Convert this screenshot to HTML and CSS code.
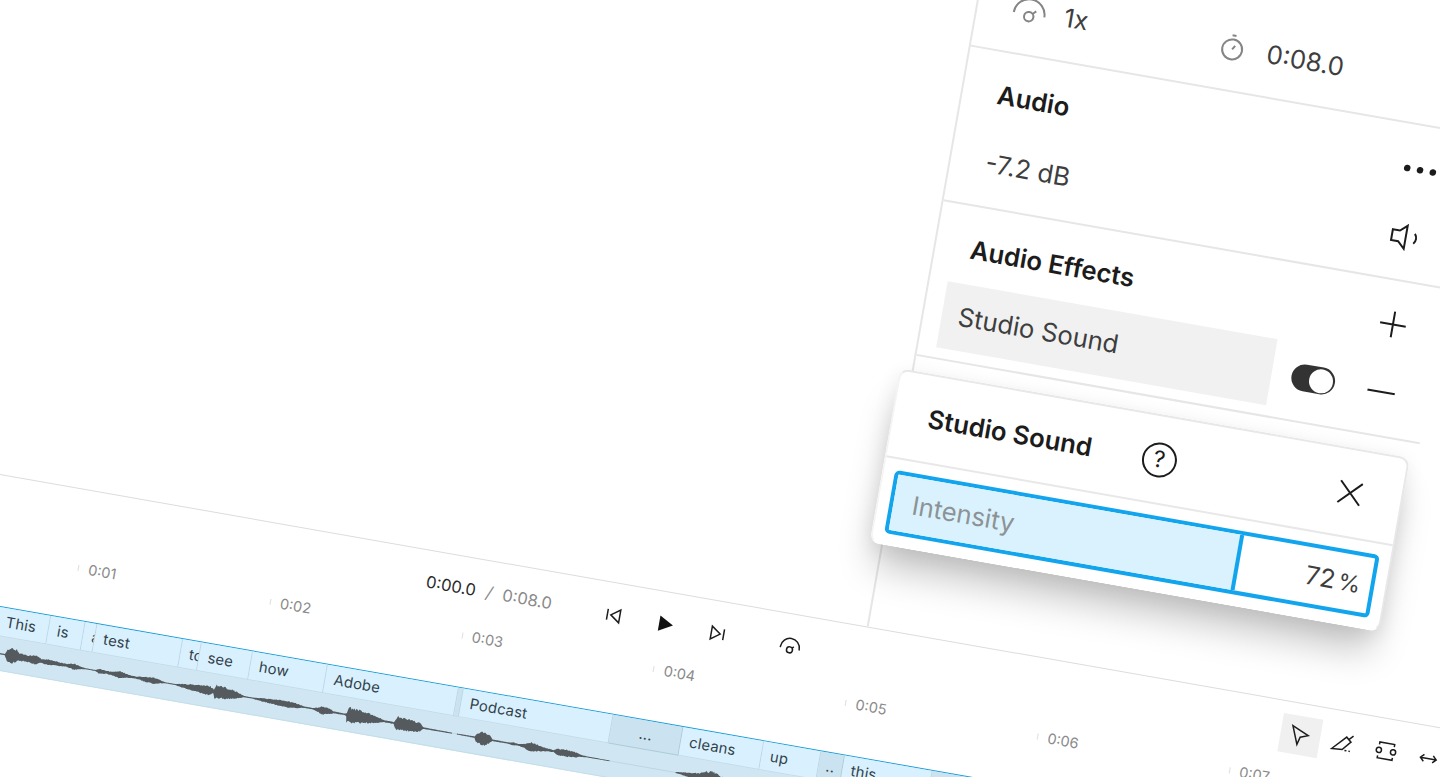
FILE: index.html
```html
<!DOCTYPE html>
<html lang="en">
<head>
  <meta charset="utf-8">
  <title>Studio Sound</title>
  <link rel="stylesheet" href="styles.css">
</head>
<body>
  <div class="scene">

    <div class="stage">
      <div class="preview"></div>

      <aside class="sidebar">
        <section class="section clip-info">
          <div class="speed">
            <svg class="icon gray" width="40" height="40" viewBox="0 0 40 40">
              <path d="M4.5 22.5a15.5 15.5 0 0 1 31 0"/>
              <circle cx="20" cy="24.5" r="4.7"/>
              <path d="M23.3 21.2l3.2-3.2"/>
            </svg>
            <span>1x</span>
          </div>
          <div class="duration">
            <svg class="icon gray" width="30" height="30" viewBox="0 0 30 30">
              <circle cx="15" cy="16.5" r="10"/>
              <path d="M15 16.5l2.4-4M13 2.5h4"/>
            </svg>
            <span>0:08.0</span>
          </div>
        </section>

        <section class="section">
          <div class="row">
            <h2>Audio</h2>
            <svg class="dots" width="34" height="28" viewBox="0 0 34 28">
              <circle cx="4" cy="14" r="3.3"/><circle cx="17" cy="14" r="3.3"/><circle cx="30" cy="14" r="3.3"/>
            </svg>
          </div>
          <div class="row">
            <span class="volume">-7.2 dB</span>
            <svg class="icon speaker" width="30" height="30" viewBox="0 0 30 30">
              <path d="M2.5 8.8h7.2l6.8-6v23.4l-6.8-6.5H2.5z"/>
              <path d="M25 9.5c2.6 2.8 2.6 7.2 0 10"/>
            </svg>
          </div>
        </section>

        <section class="section">
          <div class="row">
            <h2>Audio Effects</h2>
            <svg class="icon" width="28" height="28" viewBox="0 0 28 28"><path d="M1 13.5h26M14 .5v26"/></svg>
          </div>
          <div class="row effect-row">
            <div class="effect">Studio Sound</div>
            <div class="toggle"><span class="knob"></span></div>
            <svg class="icon" width="28" height="28" viewBox="0 0 28 28"><path d="M0 13h28"/></svg>
          </div>
        </section>

        <div class="popover">
          <div class="popover-head">
            <h2>Studio Sound</h2>
            <div class="help">?</div>
            <svg class="icon close" width="28" height="28" viewBox="0 0 28 28"><path d="M3 3l22 22M25 3L3 25"/></svg>
          </div>
          <div class="intensity">
            <div class="fill">Intensity</div>
            <div class="value">72<span>%</span></div>
          </div>
        </div>
      </aside>
    </div>

    <div class="timeline">
      <div class="controls">
        <div class="time"><b>0:00.0</b><i>/</i><span>0:08.0</span></div>
        <div class="transport">
          <svg class="icon small" width="20" height="20" viewBox="0 0 20 20"><path d="M3.5 4.5v11M7 10l9-6.5v13z"/></svg>
          <svg class="play" width="20" height="20" viewBox="0 0 20 20"><path d="M3 2v15.500L17 9.700z"/></svg>
          <svg class="icon small" width="20" height="20" viewBox="0 0 20 20"><path d="M16.5 4.5v11M13 10L4 3.5v13z"/></svg>
          <svg class="icon small gauge" width="24" height="24" viewBox="0 0 24 24">
            <path d="M2.5 14.5V13.500a9.500 9.500 0 0 1 19 0V14.500"/>
            <circle cx="12" cy="15.500" r="3"/>
            <path d="M14.2 13.500l1.500-1.700"/>
          </svg>
        </div>
        <div class="tools">
          <div class="tool active">
            <svg class="icon small" width="24" height="24" viewBox="0 0 24 24"><path d="M3 3l16.700 7.200-7.600 3-2 7.500z"/></svg>
          </div>
          <div class="tool">
            <svg class="icon small" width="24" height="24" viewBox="0 0 24 24">
              <path d="M2 18.800L15 5l5 4.200-7.500 8.800zM17.500 7l4-4.200M15 18.500h2M19 18.500h1.500"/>
            </svg>
          </div>
          <div class="tool">
            <svg class="icon small" width="24" height="24" viewBox="0 0 24 24">
              <path d="M4.500 6.500V4h15v2.500M4.500 17.500V20h15v-2.500"/>
              <circle cx="4.800" cy="12" r="2.600"/><circle cx="19.200" cy="12" r="2.600"/>
            </svg>
          </div>
          <div class="tool">
            <svg class="icon small" width="24" height="24" viewBox="0 0 24 24"><path d="M4 12h16M7.500 8.500L4 12l3.500 3.500M16.500 8.500L20 12l-3.500 3.500"/></svg>
          </div>
        </div>
      </div>

      <div class="ruler">
        <span>0:01</span><span>0:02</span><span>0:03</span><span>0:04</span><span>0:05</span><span>0:06</span><span>0:07</span>
      </div>

      <div class="clip">
        <div class="words">
          <div class="word w52">This</div>
          <div class="word w35">is</div>
          <div class="word w12">a</div>
          <div class="word w87">test</div>
          <div class="word w19">to</div>
          <div class="word w52">see</div>
          <div class="word w76">how</div>
          <div class="word w133">Adobe</div>
          <div class="word gap w5"></div>
          <div class="word w152">Podcast</div>
          <div class="word gap pause w71">...</div>
          <div class="word w82">cleans</div>
          <div class="word w58">up</div>
          <div class="word gap pause w24">..</div>
          <div class="word w89">this</div>
          <div class="word gap rest"></div>
        </div>
        <svg class="wave" width="1200" height="33" viewBox="0 0 1200 33">
          <path class="midline" d="M0 17h1200"/>
          <path class="shape" id="wave"/>
        </svg>
      </div>
    </div>
  </div>

  <script>
    // [position, amplitude] pairs of the speech envelope, one list per take
    const takes = [
      [[0, .5], [13, .6], [15, 5], [19, 7.5], [24, 7], [27, 4], [37, 3.5], [45, 4.5], [50, 2], [57, 2.7],
       [67, 2], [76, 1.500], [83, 3.2], [89, 1.500], [95, .5], [105, .5], [109, 2.4], [116, 1.500], [123, 2],
       [129, 3.800], [136, 2], [146, 1], [156, 2.700], [165, 3.2], [171, 1.500], [176, .5], [186, .5],
       [192, 1.700], [202, 3], [213, 4], [221, 4.500], [225, 2], [227, 7], [236, 6], [245, 4.5], [252, 2],
       [256, .7], [264, .5], [274, 1.700], [286, 2.400], [296, 3.3], [304, 3], [311, 2], [317, .7], [326, .7],
       [330, 2], [335, 4], [341, 3.3], [347, 1], [358, .7], [360, 1.800], [361, 7.5], [371, 7], [378, 5.5],
       [387, 4.2], [393, 2.700], [398, 1], [408, 1], [411, 7], [418, 6.5], [427, 5.500], [435, 4], [438, .8],
       [467, .5]],
      [[472, .5], [490, .7], [492, 4.5], [496, 6.500], [501, 6.5], [505, 4], [508, .8], [525, .7], [529, 1.700],
       [534, .8], [541, 2.400], [546, 4.8], [554, 3.3], [562, 1.700], [570, 1], [573, 3], [582, 3.8],
       [592, 2.700], [598, 1], [604, .5], [627, .4]],
      [[694, .4], [706, 2.200], [718, 3.500], [724, 7], [733, 6.8], [740, 4], [750, 3], [765, 1]]
    ];

    function amplitude(take, x) {
      for (let i = 1; i < take.length; i++) {
        const [x0, a0] = take[i - 1];
        const [x1, a1] = take[i];
        if (x <= x1) return a0 + (a1 - a0) * (x - x0) / (x1 - x0);
      }
      return 0.4;
    }

    // repeatable noise between 0 and 1
    function noise(n) {
      const s = Math.sin(n * 127.1) * 43758.5453;
      return s - Math.floor(s);
    }

    function drawTake(take) {
      const mid = 17;
      const top = [];
      const bottom = [];
      for (let x = take[0][0]; x <= take[take.length - 1][0]; x++) {
        const a = amplitude(take, x);
        const up = a < 1 ? a : a * (0.75 + 0.35 * noise(x));
        const down = a < 1 ? a : a * (0.75 + 0.35 * noise(x + 5000));
        top.push(`${x} ${(mid - up).toFixed(1)}`);
        bottom.unshift(`${x} ${(mid + down).toFixed(1)}`);
      }
      return `M${top.concat(bottom).join('L')}Z`;
    }

    document.getElementById('wave').setAttribute('d', takes.map(drawTake).join(''));
  </script>
</body>
</html>
```

FILE: styles.css
```css
* {
  box-sizing: border-box;
}

html {
  overflow: hidden;
}

body {
  margin: 0;
  height: 777px;
  overflow: hidden;
  background-color: #fff;
  font-family: Inter, "Liberation Sans", sans-serif;
  color: #3e3e3e;
}

h2 {
  margin: -2px 0 0;
  font-size: 25.7px;
  font-weight: 600;
  color: #1c1c1c;
  white-space: nowrap;
}

/* the whole editor is tilted around the left end of the timeline border */
.scene {
  width: 1600px;
  margin-top: -246px;
  transform-origin: 0 720px;
  transform: rotate(9.97deg);
}

.icon {
  flex: none;
  fill: none;
  stroke: #1c1c1c;
  stroke-width: 2;
}

.icon.small {
  stroke-width: 1.5;
}

.icon.gray {
  stroke: #858585;
}

.stage {
  display: flex;
  height: 720px;
}

.preview {
  width: 880px;
}

/* Sidebar */
.sidebar {
  position: relative;
  width: 513px;
  border-left: 2px solid #e6e6e6;
  font-size: 25.7px;
}

.section {
  height: 157px;
  padding-top: 9px;
  border-bottom: 2px solid #e6e6e6;
}

.clip-info {
  display: flex;
  align-items: flex-end;
  height: 131px;
  padding: 0 0 22px 32px;
}

.speed,
.duration {
  display: flex;
  align-items: center;
  height: 40px;
}

.speed {
  width: 211px;
  gap: 15px;
}

.speed span {
  margin-top: -4px;
}

.duration {
  gap: 20px;
}

.duration span {
  margin-top: -2px;
}

.row {
  display: flex;
  align-items: center;
  justify-content: space-between;
  height: 69px;
  padding: 0 33px 0 35px;
}

.volume {
  margin-top: -2px;
}

.dots {
  margin-right: -3px;
  fill: #1c1c1c;
}

.speaker {
  margin-right: 3px;
}

.effect-row {
  padding-left: 17.5px;
}

.effect {
  width: 335px;
  height: 67px;
  margin-top: -2px;
  padding-left: 17px;
  line-height: 65px;
  background-color: #f1f1f1;
}

.toggle {
  display: flex;
  justify-content: flex-end;
  width: 44px;
  height: 27px;
  margin: -2px 11px 0 -2px;
  padding: 1.5px;
  border-radius: 14px;
  background-color: #333;
}

.knob {
  width: 24px;
  height: 24px;
  border-radius: 50%;
  background-color: #fff;
}

/* Studio Sound popover */
.popover {
  position: absolute;
  top: 460px;
  left: -14px;
  width: 518px;
  height: 177px;
  border: 2px solid #e8e8e8;
  border-bottom-color: #fff;
  border-left-color: #f4f4f4;
  border-radius: 10px;
  background-color: #fff;
  box-shadow: 0 28px 36px -6px rgba(0, 0, 0, 0.22), 0 4px 20px rgba(0, 0, 0, 0.08);
}

.popover-head {
  display: flex;
  align-items: center;
  height: 88px;
  padding: 0 37px 0 34.5px;
  border-bottom: 2px solid #e8e8e8;
}

.help {
  width: 35px;
  height: 35px;
  margin-left: 51px;
  border: 2.3px solid #1c1c1c;
  border-radius: 50%;
  font-size: 23px;
  line-height: 31px;
  text-align: center;
  color: #1c1c1c;
}

.close {
  margin-left: auto;
}

.intensity {
  display: flex;
  width: 492px;
  height: 64px;
  margin: 11px 0 0 11px;
  border: 4px solid #12a5ee;
  border-radius: 5px;
  line-height: 56px;
}

.fill {
  width: 351px;
  padding-left: 19px;
  border-right: 4px solid #12a5ee;
  background-color: #d9f2fe;
  color: #8d9296;
}

.value {
  flex: 1;
  padding-right: 10px;
  text-align: right;
}

.value span {
  margin-left: 3px;
  font-size: 23px;
}

/* Timeline */
.timeline {
  height: 300px;
  border-top: 1px solid #dcdcdc;
}

.controls {
  display: flex;
  align-items: center;
  height: 63px;
  padding-left: 438.5px;
}

.time {
  display: flex;
  width: 180.5px;
  margin-top: -2px;
  font-size: 16.5px;
  color: #8a8a8a;
}

.time b {
  font-weight: 400;
  color: #2a2a2a;
}

.time i {
  width: 27px;
  text-align: center;
}

.transport {
  display: flex;
  align-items: center;
  gap: 32.5px;
}

.play {
  fill: #111;
}

.gauge {
  margin-left: 19px;
}

.tools {
  display: flex;
  gap: 4px;
  margin-left: 486.5px;
}

.tool {
  display: flex;
  align-items: center;
  justify-content: center;
  width: 39.5px;
  height: 39.5px;
}

.tool.active {
  background-color: #f0f0f0;
}

.ruler {
  display: flex;
  height: 66px;
  padding: 12px 0 0 93px;
  font-size: 14.5px;
  line-height: 6px;
  color: #8a8a8a;
}

.ruler span {
  flex: none;
  width: 194.8px;
  height: 6px;
  padding-left: 9.5px;
  border-left: 1px solid #dedede;
}

.clip {
  width: 1200px;
  margin: -0.5px 0 0 23px;
  border-top: 1.5px solid #1ba0dc;
  border-bottom: 1px solid #c3deea;
  background-color: #d0e7f3;
}

.words {
  display: flex;
  height: 29px;
}

.word {
  flex: none;
  overflow: hidden;
  padding-left: 8.5px;
  border-right: 1px solid #bdd6e3;
  border-bottom: 1px solid #c5dce8;
  background-color: #d9f1fe;
  font-size: 14.8px;
  line-height: 28px;
  letter-spacing: 0.2px;
  color: #33414a;
}

.gap {
  padding: 0;
  background-color: #cbe3f0;
}

.pause {
  text-align: center;
  border-color: #aecbd9;
}

.w5 { width: 5px; }
.w12 { width: 12px; }
.w19 { width: 19px; }
.w24 { width: 24px; }
.w35 { width: 35px; }
.w52 { width: 52px; }
.w58 { width: 58px; }
.w71 { width: 71px; }
.w76 { width: 76px; }
.w82 { width: 82px; }
.w87 { width: 87px; }
.w89 { width: 89px; }
.w133 { width: 133px; }
.w152 { width: 152px; }

.rest {
  flex: 1;
}

.wave {
  display: block;
}

.wave .midline {
  stroke: #bdd6e3;
}

.wave .shape {
  fill: #555a5e;
}
```
